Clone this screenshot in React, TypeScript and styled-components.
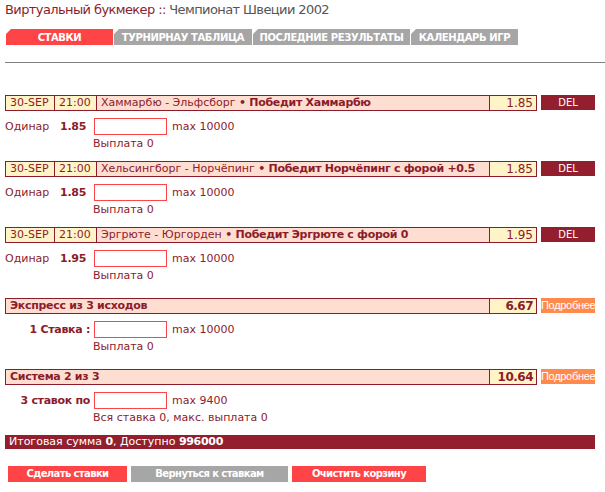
import styled, { createGlobalStyle } from 'styled-components';

const DARK = '#8c1c2c';
const DEEP = '#931f2e';
const PINK = '#ffded2';
const CREAM = '#fff4c8';
const RED = '#ff4447';
const GRAY = '#a6a6a6';
const ORANGE = '#ff8a4c';

const GlobalStyle = createGlobalStyle`
  body {
    margin: 0;
    background: #ffffff;
    font-family: "DejaVu Sans", Verdana, sans-serif;
  }
  b {
    letter-spacing: -0.3px;
  }
`;

const singles = [
  { date: '30-SEP', time: '21:00', match: 'Хаммарбю - Эльфсборг', pick: 'Победит Хаммарбю', odds: '1.85' },
  { date: '30-SEP', time: '21:00', match: 'Хельсингборг - Норчёпинг', pick: 'Победит Норчёпинг с форой +0.5', odds: '1.85' },
  { date: '30-SEP', time: '21:00', match: 'Эргрюте - Юргорден', pick: 'Победит Эргрюте с форой 0', odds: '1.95' },
];

const tabs = [
  { label: 'Ставки', width: 107, active: true },
  { label: 'Турнирнау таблица', width: 138 },
  { label: 'Последние результаты', width: 157 },
  { label: 'Календарь игр', width: 107 },
];

export default function App() {
  return (
    <Page>
      <GlobalStyle />
      <Title>
        <Brand>Виртуальный букмекер ::</Brand> Чемпионат Швеции 2002
      </Title>

      <Tabs>
        {tabs.map((t) => (
          <Tab key={t.label} $width={t.width} $active={!!t.active}>
            {t.label}
          </Tab>
        ))}
      </Tabs>
      <Rule />

      <List>
        {singles.map((s, i) => (
          <Block key={i} $gap={10}>
            <BetLine>
              <BetCells>
                <Cell $width={48} $tone={CREAM}>{s.date}</Cell>
                <Cell $width={42} $tone={CREAM}>{s.time}</Cell>
                <Cell $grow $tone={PINK}>
                  {s.match} <b>• {s.pick}</b>
                </Cell>
                <Odds $tone={CREAM}>{s.odds}</Odds>
              </BetCells>
              <SideButton $tone={DEEP}>DEL</SideButton>
            </BetLine>
            <StakeRow>
              <StakeLabel>
                <Plain>Одинар</Plain>
                <SingleOdds>{s.odds}</SingleOdds>
              </StakeLabel>
              <StakeInput />
              <Limit>max 10000</Limit>
              <Note>Выплата 0</Note>
            </StakeRow>
          </Block>
        ))}

        <Block $gap={15} $top={5}>
          <BetLine>
            <BetCells>
              <Cell $grow $tone={PINK}><b>Экспресс из 3 исходов</b></Cell>
              <Odds $tone={CREAM} $bold>6.67</Odds>
            </BetCells>
            <SideButton $tone={ORANGE} $narrow>Подробнее</SideButton>
          </BetLine>
          <StakeRow>
            <StakeLabel><b>1 Ставка :</b></StakeLabel>
            <StakeInput />
            <Limit>max 10000</Limit>
            <Note>Выплата 0</Note>
          </StakeRow>
        </Block>

        <Block $gap={10}>
          <BetLine>
            <BetCells>
              <Cell $grow $tone={PINK}><b>Система 2 из 3</b></Cell>
              <Odds $tone={CREAM} $bold>10.64</Odds>
            </BetCells>
            <SideButton $tone={ORANGE} $narrow>Подробнее</SideButton>
          </BetLine>
          <StakeRow>
            <StakeLabel><b>3 ставок по</b></StakeLabel>
            <StakeInput />
            <Limit>max 9400</Limit>
            <Note>Вся ставка 0, макс. выплата 0</Note>
          </StakeRow>
        </Block>

        <TotalBar>
          Итоговая сумма <b>0</b>, Доступно <b>996000</b>
        </TotalBar>
      </List>

      <Actions>
        <ActionButton $width={119} $tone={RED}>Сделать ставки</ActionButton>
        <ActionButton $width={157} $tone={GRAY}>Вернуться к ставкам</ActionButton>
        <ActionButton $width={134} $tone={RED}>Очистить корзину</ActionButton>
      </Actions>
    </Page>
  );
}

const Page = styled.div`
  width: 605px;
  height: 492px;
  overflow: hidden;
`;

const Title = styled.div`
  padding: 2px 5px 0;
  height: 16px;
  font-size: 13px;
  letter-spacing: -0.6px;
  line-height: 16px;
  color: #555555;
`;

const Brand = styled.span`
  color: ${DARK};
`;

const Tabs = styled.div`
  display: flex;
  gap: 1px;
  margin: 11px 0 0 6px;
`;

const Tab = styled.div<{ $width: number; $active: boolean }>`
  width: ${({ $width }) => $width}px;
  height: 16px;
  background: ${({ $active }) => ($active ? RED : GRAY)};
  clip-path: polygon(5px 0, 100% 0, 100% 100%, 0 100%, 0 5px);
  display: flex;
  align-items: center;
  justify-content: center;
  color: #ffffff;
  font-size: 10px;
  font-weight: bold;
  letter-spacing: -0.4px;
  text-transform: uppercase;
  white-space: nowrap;
`;

const Rule = styled.div`
  margin: 17px 0 0 5px;
  border-top: 1px solid #808080;
`;

const List = styled.div`
  display: flex;
  flex-direction: column;
  padding: 32px 10px 0 5px;
`;

const Block = styled.div<{ $gap: number; $top?: number }>`
  margin-top: ${({ $top }) => $top ?? 0}px;
  margin-bottom: ${({ $gap }) => $gap}px;
`;

const BetLine = styled.div`
  display: flex;
  gap: 4px;
  align-items: flex-start;
`;

const BetCells = styled.div`
  display: flex;
  width: 532px;
  height: 16px;
  box-sizing: border-box;
  border: 1px solid ${DARK};
  overflow: hidden;
`;

const Cell = styled.div<{ $width?: number; $grow?: boolean; $tone: string }>`
  ${({ $width }) => ($width ? `width: ${$width}px;` : '')}
  ${({ $grow }) => ($grow ? 'flex: 1; min-width: 0;' : 'flex-shrink: 0;')}
  box-sizing: border-box;
  padding: 0 3px 0 4px;
  background: ${({ $tone }) => $tone};
  color: ${DARK};
  font-size: 11px;
  line-height: 14px;
  white-space: nowrap;
  border-left: 1px solid ${DARK};
  &:first-child {
    border-left: none;
  }
`;

const Odds = styled.div<{ $tone: string; $bold?: boolean }>`
  width: 47px;
  flex-shrink: 0;
  box-sizing: border-box;
  padding-right: 3px;
  background: ${({ $tone }) => $tone};
  border-left: 1px solid ${DARK};
  color: ${DARK};
  font-size: 12px;
  font-weight: ${({ $bold }) => ($bold ? 'bold' : 'normal')};
  letter-spacing: ${({ $bold }) => ($bold ? '-0.5px' : '0')};
  line-height: 14px;
  text-align: right;
`;

const SideButton = styled.div<{ $tone: string; $narrow?: boolean }>`
  width: 54px;
  height: 15px;
  background: ${({ $tone }) => $tone};
  color: #ffffff;
  font-family: ${({ $narrow }) => ($narrow ? '"Liberation Sans", Arial, sans-serif' : 'inherit')};
  font-size: ${({ $narrow }) => ($narrow ? 11 : 10)}px;
  letter-spacing: ${({ $narrow }) => ($narrow ? '-0.3px' : '0')};
  line-height: 15px;
  text-align: center;
  white-space: nowrap;
`;

const StakeRow = styled.div`
  display: grid;
  grid-template-columns: 89px 73px auto;
  align-items: center;
  margin-top: 7px;
  color: ${DARK};
  font-size: 11px;
`;

const StakeLabel = styled.div`
  display: flex;
  justify-content: flex-end;
  padding-right: 4px;
  white-space: nowrap;
`;

const Plain = styled.span`
  margin-right: auto;
`;

const SingleOdds = styled.b`
  margin-right: 4px;
`;

const StakeInput = styled.input`
  width: 73px;
  height: 17px;
  box-sizing: border-box;
  margin: 0;
  border: 1px solid ${RED};
  background: #ffffff;
`;

const Limit = styled.span`
  margin-left: 5px;
  white-space: nowrap;
`;

const Note = styled.div`
  grid-column: 2 / span 2;
  margin: 2px 0 0 -1px;
  line-height: 14px;
  white-space: nowrap;
`;

const TotalBar = styled.div`
  width: 590px;
  height: 14px;
  padding-left: 4px;
  box-sizing: border-box;
  background: ${DEEP};
  color: #ffffff;
  font-size: 11px;
  line-height: 14px;
  white-space: nowrap;
`;

const Actions = styled.div`
  display: flex;
  gap: 4px;
  margin: 17px 0 0 8px;
`;

const ActionButton = styled.div<{ $width: number; $tone: string }>`
  width: ${({ $width }) => $width}px;
  height: 16px;
  background: ${({ $tone }) => $tone};
  color: #ffffff;
  font-size: 10px;
  font-weight: bold;
  letter-spacing: -0.6px;
  line-height: 16px;
  text-align: center;
  white-space: nowrap;
`;
